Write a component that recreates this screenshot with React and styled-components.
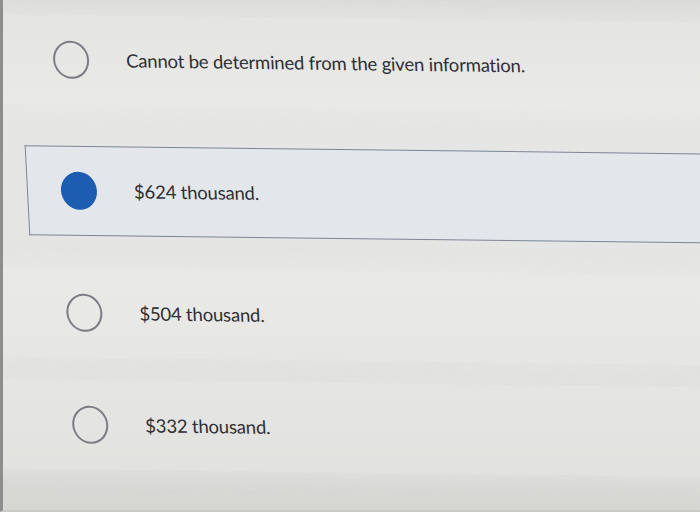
import React from 'react'
import styled, { createGlobalStyle } from 'styled-components'

const GlobalStyle = createGlobalStyle`
  html, body {
    margin: 0;
    padding: 0;
  }
  body {
    width: 700px;
    height: 512px;
    overflow: hidden;
    font-family: Lato, "Liberation Sans", sans-serif;
  }
`;

const options = [
    { id: 'a', label: 'Cannot be determined from the given information.', top: 14 },
    { id: 'b', label: '$624 thousand.', top: 41, selected: true },
    { id: 'c', label: '$504 thousand.', top: 32 },
    { id: 'd', label: '$332 thousand.', top: 22 },
];

function App() {
    return (
        <>
            <GlobalStyle />
            <Screen>
                <OptionList>
                    {options.map((option) => {
                        const { id, label, top, selected } = option;
                        return (
                            <Option key={id} $top={top} $selected={selected}>
                                <Radio $selected={selected} />
                                <Label>{label}</Label>
                            </Option>
                        )
                    })}
                </OptionList>
            </Screen>
        </>
    )
}

const Screen = styled.div`
    width: 700px;
    height: 512px;
    box-sizing: border-box;
    overflow: hidden;
    border-left: 3px solid #8d8d8b;
    border-bottom: 2px solid #c8c9c5;
    background: linear-gradient(180deg, #dcdcda 0%, #e6e6e4 22%, #e4e5e3 60%, #d6d7d3 100%);
`;

const OptionList = styled.div`
    display: flex;
    flex-direction: column;
    transform: skew(3deg, 0.7deg);
    transform-origin: 0 0;
`;

const Option = styled.div`
    display: flex;
    align-items: center;
    height: 90px;
    margin-top: ${props => props.$top}px;
    margin-left: ${props => props.$selected ? '14px' : '-40px'};
    margin-right: -60px;
    padding-left: ${props => props.$selected ? '33px' : '87px'};
    box-sizing: border-box;
    background: ${props => props.$selected ? '#e3e7eb' : 'rgba(238, 238, 236, 0.45)'};
    border: ${props => props.$selected ? '1.5px solid #7d8496' : 'none'};
    border-right: none;
    box-shadow: ${props => props.$selected ? 'none' : '0 0 18px 6px rgba(238, 238, 236, 0.35)'};
`;

const Radio = styled.span`
    flex: none;
    width: 36px;
    height: 38px;
    border-radius: 50%;
    box-sizing: border-box;
    border: ${props => props.$selected ? 'none' : '2px solid #7c7c84'};
    background: ${props => props.$selected ? '#1c5db2' : 'transparent'};
`;

const Label = styled.span`
    margin-left: 37px;
    font-size: 18.5px;
    letter-spacing: -0.2px;
    color: #2f2f34;
    white-space: nowrap;
`;

export default App
